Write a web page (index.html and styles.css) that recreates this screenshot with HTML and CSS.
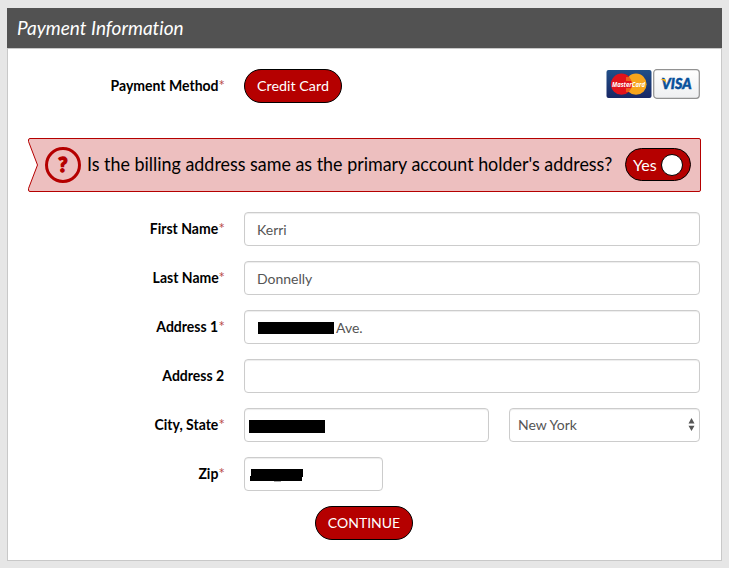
FILE: index.html
```html
<!DOCTYPE html>
<html lang="en">
<head>
<meta charset="utf-8">
<title>Payment Information</title>
<link rel="stylesheet" href="styles.css">
</head>
<body>
<section class="panel">
  <h1 class="panel-title"><span>Payment Information</span></h1>
  <form class="panel-body">
    <div class="row method">
      <div class="label"><span class="name">Payment Method</span><span class="req">*</span></div>
      <button type="button" class="pill">Credit Card</button>
      <div class="cards">
        <svg class="card" width="46" height="30" viewBox="0 0 46 30">
          <defs><linearGradient id="mc" x1="0" y1="0" x2="0" y2="1"><stop offset="0" stop-color="#214f88"/><stop offset="1" stop-color="#182765"/></linearGradient></defs>
          <rect x=".5" y="1" width="45" height="28" rx="2" fill="url(#mc)"/>
          <circle cx="30" cy="15.2" r="10.6" fill="#f7a51c"/>
          <circle cx="15.500" cy="15.200" r="10.600" fill="#e2121b"/>
          <path d="M20 9h5M20 11h6M20 20h6M20 22h5" stroke="#f7a51c" stroke-width="1"/>
          <text class="mc-text" x="6" y="18" textLength="33" lengthAdjust="spacingAndGlyphs">MasterCard</text>
        </svg>
        <svg class="card" width="47" height="30" viewBox="0 0 47 30">
          <defs><linearGradient id="vs" x1="0" y1="0" x2="0" y2="1"><stop offset="0" stop-color="#fff"/><stop offset="1" stop-color="#eeeff1"/></linearGradient></defs>
          <rect x=".7" y=".7" width="45.600" height="28.600" rx="3" fill="url(#vs)" stroke="#929292" stroke-width="1.200"/>
          <text class="visa-text" x="8.500" y="20.300" textLength="30" lengthAdjust="spacingAndGlyphs">VISA</text>
          <path d="M7.300 10h4q1.200 0 1.500 1.200l.5 2.800q-2-2.700-6-4z" fill="#f2ae14"/>
        </svg>
      </div>
    </div>

    <div class="banner">
      <svg class="banner-shape" width="673" height="54" viewBox="0 0 673 54"><path d="M2 .5H671q1.500 0 1.500 1.500V52q0 1.500-1.500 1.500H2Q.5 53.500.5 52V50.500L9.500 27 .5 3.500V2Q.5.500 2 .5z" fill="#edbfbf" stroke="#b50000"/></svg>
      <span class="help">?</span>
      <span class="question">Is the billing address same as the primary account holder's address?</span>
      <span class="toggle"><span class="yes">Yes</span><span class="knob"></span></span>
    </div>

    <div class="fields">
      <div class="row"><div class="label"><span class="name">First Name</span><span class="req">*</span></div><div class="input">Kerri</div></div>
      <div class="row"><div class="label"><span class="name">Last Name</span><span class="req">*</span></div><div class="input">Donnelly</div></div>
      <div class="row"><div class="label"><span class="name">Address 1</span><span class="req">*</span></div><div class="input"><span class="mask street"></span>Ave.</div></div>
      <div class="row"><div class="label"><span class="name">Address 2</span></div><div class="input"></div></div>
      <div class="row"><div class="label"><span class="name">City, State</span><span class="req">*</span></div><div class="input city"><span class="mask town"></span></div>
        <div class="input select">New York<svg width="7" height="14" viewBox="0 0 7 14"><path d="M3.500 0 6.500 5.500H.5zM3.500 13 .5 7.800H6.500z" fill="#555"/></svg></div></div>
      <div class="row"><div class="label"><span class="name">Zip</span><span class="req">*</span></div><div class="input zip"><svg width="54" height="13" viewBox="0 0 54 13"><path d="M1 0H53V8H52V12H0V7H1z" fill="#000"/><path d="M24 12.500h7" stroke="#aaa"/></svg></div></div>
    </div>
    <button type="button" class="pill continue">CONTINUE</button>
  </form>
</section>
</body>
</html>
```

FILE: styles.css
```css
* { box-sizing: border-box; }
body { margin: 0; padding: 8px 7px 7px; background: #e6e6e6; font-family: Lato, sans-serif; font-size: 14px; color: #000; font-variant-ligatures: none; }
.panel { width: 715px; height: 553px; background: #fff; border: 1px solid #c8c8c8; border-top: 0; }
.panel-title { margin: 0 -1px; height: 41px; padding: 0 10px; background: #525252; border-bottom: 1px solid #c8c8c8; color: #fff; font-size: 19px; font-style: italic; font-weight: 400; line-height: 40px; }
.panel-body { padding: 20px 20px 0; }
.row { display: flex; align-items: center; height: 34px; padding-right: 1px; }
.label { width: 196px; margin-right: 20px; padding-bottom: 2px; display: flex; justify-content: flex-end; font-size: 15px; font-weight: 700; line-height: 20px; white-space: nowrap; }
.name { transform: scaleX(.935); transform-origin: right; }
.req { width: 5.5px; color: #b94a48; font-weight: 400; }
.pill { width: 98px; height: 34px; padding: 0; border: 1px solid #000; border-radius: 17px; background: #b50000; color: #fff; font: 14.3px/20px Lato, sans-serif; white-space: nowrap; }
.cards { display: flex; gap: 1px; align-self: flex-start; margin-left: auto; }
.card { display: block; }
.mc-text { font: italic 700 7px "Open Sans", sans-serif; fill: #fff; }
.visa-text { font: italic 900 14.5px Lato, sans-serif; fill: #07509b; stroke: #07509b; stroke-width: .5px; }
.banner { position: relative; display: flex; align-items: center; width: 673px; height: 54px; margin: 35px 0 20px; padding: 0 10px 0 17px; }
.banner-shape { position: absolute; inset: 0; }
.help, .question, .toggle { position: relative; }
.help { flex: none; width: 36px; height: 36px; border: 3px solid #b50000; border-radius: 50%; color: #b50000; font: 900 20px/28px Lato, sans-serif; text-align: center; -webkit-text-stroke: 1.4px #b50000; }
.question { width: 525px; margin: 0 0 2px 6px; font-size: 19px; line-height: 26px; white-space: nowrap; transform: scaleX(.942); transform-origin: left; }
.toggle { display: flex; align-items: center; justify-content: space-between; width: 66px; height: 33px; margin: 0 0 1px auto; padding: 0 7px; border: 1px solid #000; border-radius: 17px; background: #b50000; color: #fff; font-size: 16px; }
.yes { padding-bottom: 1px; }
.knob { width: 22px; height: 22px; border: 1px solid #000; border-radius: 50%; background: #fff; }
.fields { display: grid; gap: 15px; }
.input { display: flex; align-items: center; flex: 1; height: 34px; padding: 1px 12px 0; border: 1px solid #ccc; border-radius: 4px; box-shadow: inset 0 1px 1px rgba(0,0,0,.075); color: #555; }
.mask { background: #000; }
.street { width: 76px; height: 12px; margin: 1px 2px 0 1px; }
.city { flex: 0 0 245px; margin-right: 20px; padding-left: 4px; }
.town { width: 76px; height: 13px; margin-top: 2px; }
.select { justify-content: space-between; padding: 0 4px 2px 8px; }
.select svg { margin-top: 2px; }
.zip { flex: 0 0 139px; padding: 2px 5px 0; }
.continue { display: block; margin: 15px auto 0 287px; font-size: 14px; }
```
